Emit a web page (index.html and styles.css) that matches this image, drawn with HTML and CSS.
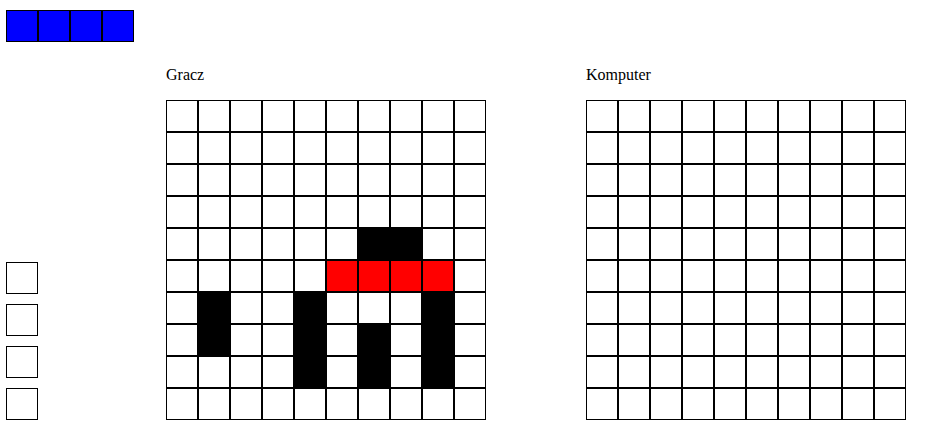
FILE: index.html
```html
<!DOCTYPE html>
<html lang="pl">
<head>
<meta charset="utf-8">
<title>Statki</title>
<link rel="stylesheet" href="styles.css">
</head>
<body>
<main class="game">
  <aside class="side">
    <div class="fleet">
      <span class="cell ship-part"></span>
      <span class="cell ship-part"></span>
      <span class="cell ship-part"></span>
      <span class="cell ship-part"></span>
    </div>
    <div class="slots">
      <button class="cell" type="button" aria-label="1"></button>
      <button class="cell" type="button" aria-label="2"></button>
      <button class="cell" type="button" aria-label="3"></button>
      <button class="cell" type="button" aria-label="4"></button>
    </div>
  </aside>
  <table class="board">
    <caption>Gracz</caption>
    <tbody id="player"></tbody>
  </table>
  <table class="board">
    <caption>Komputer</caption>
    <tbody id="computer"></tbody>
  </table>
</main>
<script src="board.js"></script>
</body>
</html>
```
FILE: styles.css
```css
* {
  box-sizing: border-box;
}

body {
  margin: 0;
  padding: 10px 6px;
  background: #fff;
  color: #000;
  font: 16px/18px "Liberation Serif", "Times New Roman", serif;
}

.game {
  display: flex;
  align-items: stretch;
}

.side {
  display: flex;
  flex-direction: column;
  justify-content: space-between;
  flex: none;
  width: 160px;
}

.fleet {
  display: flex;
}

.slots {
  display: flex;
  flex-direction: column;
  gap: 10px;
}

.cell,
.board td {
  width: 32px;
  height: 32px;
  padding: 0;
  border: 1px solid #000;
  border-radius: 0;
  background: #fff;
}

.board {
  flex: none;
  margin-top: 56px;
  border-spacing: 0;
}

.board + .board {
  margin-left: 100px;
}

.board caption {
  padding-bottom: 16px;
  text-align: left;
}

.cell.ship-part {
  background: #00f;
}

.board .ship {
  background: #000;
}

.board .target {
  background: #f00;
}
```
FILE: board.js
```js
// "#" is a placed ship, "x" is the ship being placed, "." is open water
const playerRows = [
  "..........",
  "..........",
  "..........",
  "..........",
  "......##..",
  ".....xxxx.",
  ".#..#...#.",
  ".#..#.#.#.",
  "....#.#.#.",
  ".........."
];
const computerRows = Array(10).fill("..........");
const classes = { "#": "ship", "x": "target" };

function drawBoard(id, rows) {
  const body = document.getElementById(id);
  for (const row of rows) {
    const tr = body.insertRow();
    for (const mark of row) {
      const td = tr.insertCell();
      if (classes[mark]) td.className = classes[mark];
    }
  }
}

drawBoard("player", playerRows);
drawBoard("computer", computerRows);
```
